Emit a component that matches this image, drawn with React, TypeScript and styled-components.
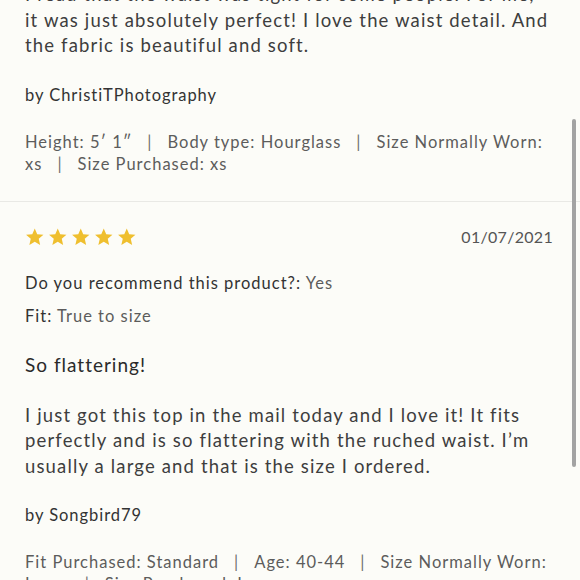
import React from "react";
import styled, { createGlobalStyle } from "styled-components";

const Global = createGlobalStyle`
  html, body { margin: 0; padding: 0; background: #fcfcf8; }
  body { font-family: Lato, "Open Sans", "Noto Sans", sans-serif; -webkit-font-smoothing: antialiased; }
`;

const Viewport = styled.div`
  position: relative;
  width: 580px;
  height: 580px;
  overflow: hidden;
  background: #fcfcf8;
`;

const Content = styled.div`
  margin-top: -18px;
`;

const Review = styled.section<{ $first?: boolean }>`
  padding: ${(p) => (p.$first ? "0" : "23px")} 25px 26px 25px;
  border-bottom: 1px solid #e9e9e5;
`;

const Header = styled.div`
  display: flex;
  align-items: center;
  justify-content: space-between;
  height: 24px;
  padding-right: 2px;
`;

const Stars = styled.div`
  display: flex;
  gap: 3.5px;
`;

const DateText = styled.span`
  font-size: 16px;
  color: #555;
  letter-spacing: 0.3px;
`;

const Field = styled.p<{ $gap?: number }>`
  margin: ${(p) => p.$gap ?? 0}px 0 0;
  font-size: 16.5px;
  line-height: 24px;
  color: #333;
  letter-spacing: 1px;
`;

const FieldValue = styled.span`
  color: #5c5c5c;
`;

const Title = styled.h3`
  margin: 23px 0 0;
  font-size: 19px;
  line-height: 28px;
  font-weight: 400;
  color: #2a2a2a;
  letter-spacing: 1px;
`;

const Body = styled.p<{ $gap?: number }>`
  margin: ${(p) => p.$gap ?? 24}px 0 0;
  font-size: 18.5px;
  line-height: 25.5px;
  color: #3e3e3e;
  letter-spacing: 1.15px;
  white-space: nowrap;
`;

const Author = styled.p`
  margin: 24px 0 0;
  font-size: 16.5px;
  line-height: 24px;
  color: #333;
  letter-spacing: 0.95px;
`;

const Meta = styled.p`
  margin: 24px 0 0;
  font-size: 16.5px;
  line-height: 22px;
  color: #5c5c5c;
  letter-spacing: 1px;
  white-space: nowrap;
`;

const Sep = styled.span`
  margin: 0 15px;
  color: #6e6e6e;
`;

const Scrollbar = styled.div`
  position: absolute;
  right: 4px;
  top: 119px;
  width: 4px;
  height: 348px;
  border-radius: 2px;
  background: #a3a3a3;
`;

const Star = () => (
  <svg width="19.5" height="19.5" viewBox="0 0 24 24">
    <path
      fill="#efbf2f"
      d="M12 1.8l3.05 7.05 7.65.7-5.8 5.05 1.75 7.5L12 18.1l-6.65 3.95 1.75-7.5L1.3 9.55l7.65-.7z"
    />
  </svg>
);

const MetaLine = ({ items }: { items: string[] }) => (
  <>
    {items.map((t, i) => (
      <React.Fragment key={i}>
        {i > 0 && <Sep>|</Sep>}
        {t}
      </React.Fragment>
    ))}
  </>
);

export default function App() {
  return (
    <Viewport>
      <Global />
      <Content>
        <Review $first>
          <Body $gap={0}>
            I read that the waist was tight for some people. For me,
            <br />
            it was just absolutely perfect! I love the waist detail. And
            <br />
            the fabric is beautiful and soft.
          </Body>
          <Author>by ChristiTPhotography</Author>
          <Meta>
            <MetaLine items={["Height: 5\u2032 1\u2033", "Body type: Hourglass", "Size Normally Worn:"]} />
            <br />
            <MetaLine items={["xs", "Size Purchased: xs"]} />
          </Meta>
        </Review>
        <Review>
          <Header>
            <Stars>
              <Star />
              <Star />
              <Star />
              <Star />
              <Star />
            </Stars>
            <DateText>01/07/2021</DateText>
          </Header>
          <Field $gap={22}>
            Do you recommend this product?: <FieldValue>Yes</FieldValue>
          </Field>
          <Field $gap={9}>
            Fit: <FieldValue>True to size</FieldValue>
          </Field>
          <Title>So flattering!</Title>
          <Body>
            I just got this top in the mail today and I love it! It fits
            <br />
            perfectly and is so flattering with the ruched waist. I’m
            <br />
            usually a large and that is the size I ordered.
          </Body>
          <Author>by Songbird79</Author>
          <Meta>
            <MetaLine items={["Fit Purchased: Standard", "Age: 40-44", "Size Normally Worn:"]} />
            <br />
            <MetaLine items={["Large", "Size Purchased: Large"]} />
          </Meta>
        </Review>
      </Content>
      <Scrollbar />
    </Viewport>
  );
}
